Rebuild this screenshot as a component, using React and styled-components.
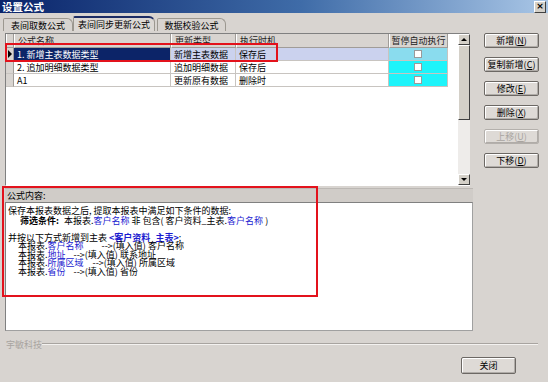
import React from 'react';
import styled, { createGlobalStyle } from 'styled-components';

const Global = createGlobalStyle`
  html, body { margin: 0; padding: 0; background: #d8d4d0; }
  body {
    font-family: "Noto Sans CJK SC", "Noto Sans", sans-serif;
    font-size: 9px;
    color: #000;
  }
  #root { width: 548px; height: 382px; }
`;

const Window = styled.div`
  position: relative;
  width: 548px;
  height: 382px;
  background: #d8d4d0;
  display: flex;
  flex-direction: column;
  overflow: hidden;
`;

const TitleBar = styled.div`
  height: 13px;
  flex: none;
  background: linear-gradient(to right, #0a246a 0%, #3f6ca8 55%, #a9c6e6 100%);
  display: flex;
  align-items: center;
  justify-content: space-between;
  padding: 0 2px 0 2px;
`;

const Title = styled.span`
  color: #fff;
  font-weight: bold;
  font-size: 10.5px;
  line-height: 13px;
`;

const CloseBox = styled.div`
  width: 10px;
  height: 10px;
  background: #d4d0c8;
  border: 1px solid;
  border-color: #fff #404040 #404040 #fff;
  display: flex;
  align-items: center;
  justify-content: center;
  font-family: "DejaVu Sans", sans-serif;
  font-size: 9px;
  font-weight: bold;
  line-height: 1;
`;

const Body = styled.div`
  flex: 1;
  display: flex;
  flex-direction: column;
  padding: 3px 0 0 3px;
`;

const TabStrip = styled.div`
  height: 15px;
  display: flex;
  align-items: flex-end;
`;

const Tab = styled.div`
  width: ${p => p.$w}px;
  height: ${p => (p.$active ? 15 : 13)}px;
  box-sizing: border-box;
  background: ${p => (p.$active ? '#dcd8d4' : '#d8d4d0')};
  border: 1px solid #9c9890;
  border-bottom: none;
  border-top: ${p => (p.$active ? '2px solid #1c2c64' : '1px solid #9c9890')};
  border-radius: 2px 6px 0 0;
  margin-right: ${p => p.$mr || 0}px;
  display: flex;
  align-items: center;
  justify-content: center;
  font-size: 9px;
  line-height: 1;
  color: #000;
`;

const TabPage = styled.div`
  padding: 2px 0 0 2px;
  display: flex;
  flex-direction: column;
`;

const TopRow = styled.div`
  display: flex;
  align-items: flex-start;
`;

const Grid = styled.div`
  width: 465px;
  height: 153px;
  box-sizing: border-box;
  border: 1px solid;
  border-color: #808080 #ffffff #ffffff #808080;
  background: #fff;
  display: flex;
`;

const GridBody = styled.div`
  flex: 1;
  display: flex;
  flex-direction: column;
`;

const HeaderRow = styled.div`
  display: flex;
  height: 14px;
  background: #d8d4d0;
  flex: none;
`;

const HeadCell = styled.div`
  width: ${p => p.$w}px;
  flex: none;
  box-sizing: border-box;
  border-right: 1px solid #a09c98;
  border-bottom: 1px solid #a09c98;
  border-left: 1px solid #fff;
  display: flex;
  align-items: center;
  justify-content: ${p => (p.$center ? 'center' : 'flex-start')};
  padding-left: ${p => (p.$center ? 0 : 3)}px;
  font-size: 9px;
  line-height: 1;
  color: #222;
`;

const HeadFill = styled.div`
  flex: 1;
  background: #fff;
`;

const Row = styled.div`
  display: flex;
  height: 13px;
  flex: none;
`;

const IndCell = styled.div`
  width: 8px;
  flex: none;
  box-sizing: border-box;
  background: #d8d4d0;
  border-right: 1px solid #a09c98;
  border-bottom: 1px solid #c8c4c0;
  display: flex;
  align-items: center;
  justify-content: center;
`;

const Arrow = styled.span`
  width: 0;
  height: 0;
  border-top: 4px solid transparent;
  border-bottom: 4px solid transparent;
  border-left: 4px solid #000;
`;

const Cell = styled.div`
  width: ${p => p.$w}px;
  flex: none;
  box-sizing: border-box;
  background: ${p => p.$bg || '#fff'};
  color: ${p => p.$fg || '#000'};
  border-right: 1px solid #c8c4c0;
  border-bottom: 1px solid #c8c4c0;
  display: flex;
  align-items: center;
  justify-content: ${p => (p.$center ? 'center' : 'flex-start')};
  padding-left: ${p => (p.$center ? 0 : 3)}px;
  font-size: 9px;
  line-height: 1;
  white-space: pre;
`;

const Check = styled.span`
  width: 8px;
  height: 8px;
  box-sizing: border-box;
  background: #fff;
  border: 1px solid #9a9a9a;
`;

const ScrollBar = styled.div`
  width: 12px;
  flex: none;
  display: flex;
  flex-direction: column;
  background: #eeecea;
  margin-left: 10px;
`;

const ScrollBtn = styled.div`
  height: 11px;
  flex: none;
  box-sizing: border-box;
  background: #d4d0c8;
  border: 1px solid;
  border-color: #fff #404040 #404040 #fff;
  display: flex;
  align-items: center;
  justify-content: center;
`;

const Tri = styled.span`
  width: 0;
  height: 0;
  border-left: 3px solid transparent;
  border-right: 3px solid transparent;
  ${p => (p.$up ? 'border-bottom: 3px solid #000;' : 'border-top: 3px solid #000;')}
`;

const Thumb = styled.div`
  height: 75px;
  flex: none;
  box-sizing: border-box;
  background: #d4d0c8;
  border: 1px solid;
  border-color: #fff #404040 #404040 #fff;
`;

const Track = styled.div`
  flex: 1;
`;

const ButtonCol = styled.div`
  display: flex;
  flex-direction: column;
  gap: 9px;
  margin-left: 14px;
`;

const Btn = styled.button`
  width: 55px;
  height: ${p => p.$h || 15}px;
  box-sizing: border-box;
  padding: 0;
  background: #dedad6;
  border: 1px solid #6c6864;
  border-radius: 2px;
  box-shadow: inset 1px 1px 0 #fff, inset -1px -1px 0 #b0aca8;
  font-family: "Noto Sans CJK SC", sans-serif;
  font-size: 9px;
  line-height: 1;
  color: ${p => (p.disabled ? '#a8a4a0' : '#000')};
  display: flex;
  align-items: center;
  justify-content: center;
  ${p => p.disabled && 'border-color: #b4b0ac;'}
`;

const Formula = styled.div`
  width: 468px;
  margin-top: 2px;
  display: flex;
  flex-direction: column;
`;

const FormulaHead = styled.div`
  height: 13px;
  background: #d0ccc8;
  border-top: 1px solid #bcb8b4;
  display: flex;
  align-items: center;
  padding-left: 2px;
  font-size: 9px;
  line-height: 1;
`;

const FormulaText = styled.div`
  height: 129px;
  box-sizing: border-box;
  background: #fff;
  border: 1px solid;
  border-color: #808080 #a0a0a0 #a0a0a0 #808080;
  padding: 2px 0 0 2px;
  font-size: 9px;
  line-height: 9px;
  white-space: pre;
`;

const Line = styled.div`
  height: ${p => p.$h || 9}px;
  line-height: ${p => p.$h || 9}px;
  padding-left: ${p => p.$indent || 0}px;
  display: flex;
  align-items: center;
`;

const Blue = styled.span`
  color: #1c1cd0;
  font-weight: ${p => (p.$bold ? 'bold' : 'normal')};
`;

const Bold = styled.span`
  font-weight: bold;
`;

const Sp = styled.span`
  display: inline-block;
  width: ${p => p.$w}px;
  flex: none;
`;

const Footer = styled.div`
  margin-top: 8px;
  height: 10px;
  display: flex;
  align-items: center;
  padding-right: 10px;
`;

const Legend = styled.span`
  color: #a8a4a0;
  font-size: 9px;
  line-height: 1;
  padding-left: 3px;
`;

const Rule = styled.div`
  flex: 1;
  height: 0;
  border-top: 1px solid #a8a4a0;
  border-bottom: 1px solid #f4f2f0;
`;

const FooterRow = styled.div`
  display: flex;
  justify-content: flex-end;
  padding-right: 32px;
  margin-top: 8px;
`;

const Mark = styled.div`
  position: absolute;
  left: ${p => p.$x}px;
  top: ${p => p.$y}px;
  width: ${p => p.$w}px;
  height: ${p => p.$h}px;
  box-sizing: border-box;
  border: 2px solid #e3121c;
  pointer-events: none;
`;

const cols = [
  { key: 'name', w: 157, label: '公式名称' },
  { key: 'type', w: 65, label: '更新类型' },
  { key: 'when', w: 153, label: '执行时机' },
];

const rows = [
  { name: '1. 新增主表数据类型', type: '新增主表数据', when: '保存后', sel: true },
  { name: '2. 追加明细数据类型', type: '追加明细数据', when: '保存后' },
  { name: 'A1', type: '更新原有数据', when: '删除时' },
];

const buttons = [
  { t: '新增', k: 'N' },
  { t: '复制新增', k: 'C' },
  { t: '修改', k: 'E' },
  { t: '删除', k: 'X' },
  { t: '上移', k: 'U', disabled: true },
  { t: '下移', k: 'D' },
];

const mappings = [
  { f: '客户名称', gap: 18, to: '客户名称' },
  { f: '地址', gap: 8, to: '联系地址' },
  { f: '所属区域', gap: 9, to: '所属区域' },
  { f: '省份', gap: 8, to: '省份' },
];

export default function App() {
  return (
    <>
      <Global />
      <Window>
        <TitleBar>
          <Title>设置公式</Title>
          <CloseBox>×</CloseBox>
        </TitleBar>
        <Body>
          <TabStrip>
            <Tab $w={70}>表间取数公式</Tab>
            <Tab $w={82} $active $mr={2}>表间同步更新公式</Tab>
            <Tab $w={69}>数据校验公式</Tab>
          </TabStrip>
          <TabPage>
            <TopRow>
              <Grid>
                <GridBody>
                  <HeaderRow>
                    <HeadCell $w={8} />
                    {cols.map(c => (
                      <HeadCell key={c.key} $w={c.w}>{c.label}</HeadCell>
                    ))}
                    <HeadCell $w={59} $center>暂停自动执行</HeadCell>
                    <HeadFill />
                  </HeaderRow>
                  {rows.map((r, i) => (
                    <Row key={i}>
                      <IndCell>{r.sel && <Arrow />}</IndCell>
                      <Cell $w={157} $bg={r.sel ? '#0c2468' : '#fff'} $fg={r.sel ? '#fff' : '#000'}>{r.name}</Cell>
                      <Cell $w={65} $bg={r.sel ? '#cbd2ee' : '#fff'}>{r.type}</Cell>
                      <Cell $w={153} $bg={r.sel ? '#cbd2ee' : '#fff'}>{r.when}</Cell>
                      <Cell $w={59} $center $bg={r.sel ? '#8adcee' : '#1ef4fa'}><Check /></Cell>
                    </Row>
                  ))}
                </GridBody>
                <ScrollBar>
                  <ScrollBtn><Tri $up /></ScrollBtn>
                  <Thumb />
                  <Track />
                  <ScrollBtn><Tri /></ScrollBtn>
                </ScrollBar>
              </Grid>
              <ButtonCol>
                {buttons.map(b => (
                  <Btn key={b.k} disabled={b.disabled}>
                    {b.t}(<u>{b.k}</u>)
                  </Btn>
                ))}
              </ButtonCol>
            </TopRow>
            <Formula>
              <FormulaHead>公式内容:</FormulaHead>
              <FormulaText>
                <Line $h={11}>保存本报表数据之后, 提取本报表中满足如下条件的数据:</Line>
                <Line $indent={12}>
                  <Bold>筛选条件:</Bold><Sp $w={5} />本报表.<Blue>客户名称</Blue> 非 包含( 客户资料_主表.<Blue>客户名称</Blue> )
                </Line>
                <Line $h={8} />
                <Line>并按以下方式新增到主表 <Blue $bold>&lt;客户资料_主表&gt;</Blue>:</Line>
                {mappings.map(m => (
                  <Line key={m.f} $h={8.5} $indent={10}>
                    本报表.<Blue>{m.f}</Blue><Sp $w={m.gap} />--&gt;(填入值) {m.to}
                  </Line>
                ))}
              </FormulaText>
            </Formula>
          </TabPage>
          <Footer>
            <Legend>宇敏科技</Legend>
            <Rule />
          </Footer>
          <FooterRow>
            <Btn $h={17}>关闭</Btn>
          </FooterRow>
        </Body>
        <Mark $x={5} $y={43} $w={273} $h={19} />
        <Mark $x={2} $y={186} $w={316} $h={111} />
      </Window>
    </>
  );
}
